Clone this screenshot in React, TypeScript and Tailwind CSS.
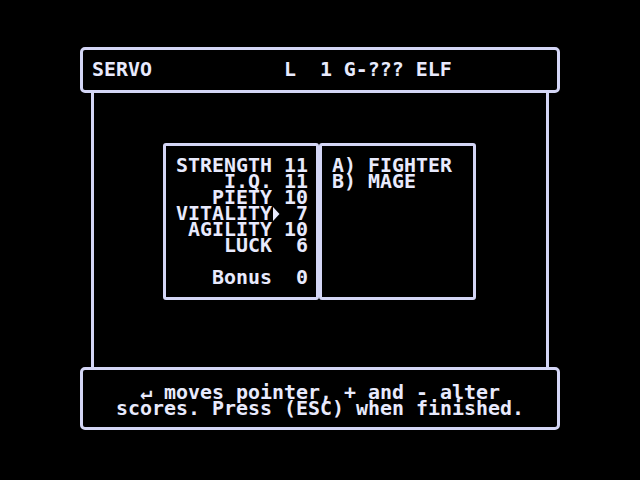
const line = 'border-[#d4d6f6]';

function Pointer() {
  return (
    <svg width="12" height="16" viewBox="0 0 12 16" className="inline-block align-top">
      <polygon points="1,1 7.5,8 1,15" fill="#e8eafd" />
    </svg>
  );
}

const stats: { label: string; value: string }[] = [
  { label: 'STRENGTH', value: '11' },
  { label: 'I.Q.', value: '11' },
  { label: 'PIETY', value: '10' },
  { label: 'VITALITY', value: ' 7' },
  { label: 'AGILITY', value: '10' },
  { label: 'LUCK', value: ' 6' },
];

export default function App() {
  return (
    <div
      className="w-[640px] h-[480px] bg-black pt-[47px] pl-[80px] text-[#e8eafd] text-[19.93px] leading-4 font-bold whitespace-pre"
      style={{ fontFamily: '"DejaVu Sans Mono", "Liberation Mono", monospace' }}
    >
      <div className="w-[480px] flex flex-col">
        {/* character header */}
        <div className={`h-[46px] border-[3px] ${line} rounded-[5px] pt-[12px] pl-[9px]`}>
          {'SERVO           L  1 G-??? ELF'}
        </div>

        {/* side rails around the stat panels */}
        <div className={`h-[274px] mx-[11px] border-x-[3px] ${line} pt-[50px] pl-[69px] flex`}>
          <div className={`w-[156px] h-[157px] border-[3px] ${line} rounded-[3px] pt-[12px] pl-[10px] flex flex-col`}>
            {stats.map((s) => (
              <div key={s.label} className="flex h-4">
                <span className="w-[96px] text-right">{s.label}</span>
                <span className="w-[12px]">{s.label === 'VITALITY' ? <Pointer /> : ' '}</span>
                <span>{s.value}</span>
              </div>
            ))}
            <div className="h-4" />
            <div className="flex h-4">
              <span className="w-[96px] text-right">Bonus</span>
              <span className="w-[12px]"> </span>
              <span>{' 0'}</span>
            </div>
          </div>
          <div className={`w-[157px] h-[157px] border-[3px] ${line} rounded-[3px] pt-[12px] pl-[10px] flex flex-col`}>
            <div>A) FIGHTER</div>
            <div>B) MAGE</div>
          </div>
        </div>

        {/* help line */}
        <div className={`h-[63px] border-[3px] ${line} rounded-[5px] pt-[15px] text-center`}>
          <div>{'↵ moves pointer, + and - alter'}</div>
          <div>{'scores. Press (ESC) when finished.'}</div>
        </div>
      </div>
    </div>
  );
}
